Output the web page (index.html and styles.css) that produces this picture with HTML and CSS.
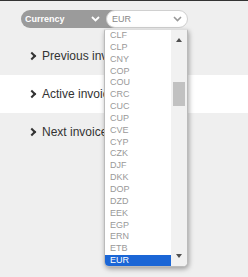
FILE: index.html
```html
<!DOCTYPE html>
<html lang="en">
<head>
    <meta charset="UTF-8">
    <meta name="viewport" content="width=device-width, initial-scale=1.0">
    <title>Invoices</title>
    <link rel="stylesheet" href="styles.css">
</head>
<body>
    <div class="toolbar">
        <div class="currency">
            <span class="currency-label">
                Currency
                <svg class="chev" width="9" height="6" viewBox="0 0 9 6"><path d="M1 1l3.5 3.5L8 1" fill="none" stroke="#fff" stroke-width="1.8"/></svg>
            </span>
            <div class="currency-select">
                EUR
                <svg class="chev" width="9" height="6" viewBox="0 0 9 6"><path d="M1 1l3.5 3.5L8 1" fill="none" stroke="#999" stroke-width="1.6"/></svg>
            </div>
        </div>
    </div>

    <!-- invoice navigation -->
    <ul class="nav">
        <li class="nav-row"><span class="arrow"></span>Previous invoices</li>
        <li class="nav-row active"><span class="arrow"></span>Active invoice</li>
        <li class="nav-row"><span class="arrow"></span>Next invoice</li>
    </ul>

    <!-- open currency list -->
    <div class="dropdown">
        <ul class="options">
            <li>CLF</li>
            <li>CLP</li>
            <li>CNY</li>
            <li>COP</li>
            <li>COU</li>
            <li>CRC</li>
            <li>CUC</li>
            <li>CUP</li>
            <li>CVE</li>
            <li>CYP</li>
            <li>CZK</li>
            <li>DJF</li>
            <li>DKK</li>
            <li>DOP</li>
            <li>DZD</li>
            <li>EEK</li>
            <li>EGP</li>
            <li>ERN</li>
            <li>ETB</li>
            <li class="selected">EUR</li>
        </ul>
        <div class="scrollbar">
            <span class="tri up"></span>
            <span class="thumb"></span>
            <span class="tri down"></span>
        </div>
    </div>
</body>
</html>
```

FILE: styles.css
```css
body {
    margin: 0;
    background: #efefef;
    border-top: 1px solid #333;
    font-family: "Liberation Sans", Arial, sans-serif;
    height: 276px;
    overflow: hidden;
}

.toolbar {
    padding: 9px 0 0 21px;
    height: 18px;
}

.currency {
    display: flex;
    height: 18px;
    font-size: 9px;
}

.currency-label {
    display: flex;
    align-items: center;
    background: #9b9b9b;
    color: #fff;
    font-weight: bold;
    border-radius: 9px 0 0 9px;
    padding: 0 15px 0 4px;
    width: 75px;
    justify-content: space-between;
}

.currency-select {
    display: flex;
    align-items: center;
    justify-content: space-between;
    box-sizing: border-box;
    width: 82px;
    margin-left: -9px;
    padding: 0 5px 0 5px;
    background: #fff;
    color: #888;
    border: 1px solid #d0d0d0;
    border-radius: 9px;
}

.nav {
    list-style: none;
    margin: 9px 0 0 0;
    padding: 0;
}

.nav-row {
    display: flex;
    align-items: center;
    height: 38px;
    padding-left: 29px;
    font-size: 12px;
    color: #333;
}

.nav-row.active {
    background: #fff;
}

.arrow {
    width: 4px;
    height: 4px;
    border-top: 2px solid #333;
    border-right: 2px solid #333;
    transform: rotate(45deg);
    margin-right: 7px;
}

.dropdown {
    position: absolute;
    left: 104px;
    top: 29px;
    width: 84px;
    height: 238px;
    display: flex;
    background: #fff;
    border: 1px solid #bbb;
    border-top-color: #ddd;
    border-radius: 2px 2px 5px 5px;
    box-shadow: 1px 2px 5px rgba(0, 0, 0, 0.35);
    box-sizing: border-box;
    overflow: hidden;
}

.options {
    list-style: none;
    margin: 0;
    padding: 0;
    flex: 1;
}

.options li {
    height: 11.85px;
    line-height: 11.85px;
    padding-left: 5px;
    font-size: 9px;
    color: #999;
}

.options li.selected {
    background: #1b66d6;
    color: #fff;
}

.scrollbar {
    position: relative;
    width: 16px;
    background: #f1f1f1;
}

.thumb {
    position: absolute;
    left: 2px;
    top: 52px;
    width: 12px;
    height: 24px;
    background: #c1c1c1;
}

.tri {
    position: absolute;
    left: 5px;
    width: 0;
    height: 0;
    border-left: 3.5px solid transparent;
    border-right: 3.5px solid transparent;
}

.tri.up {
    top: 8px;
    border-bottom: 4px solid #505050;
}

.tri.down {
    bottom: 8px;
    border-top: 4px solid #505050;
}
```
